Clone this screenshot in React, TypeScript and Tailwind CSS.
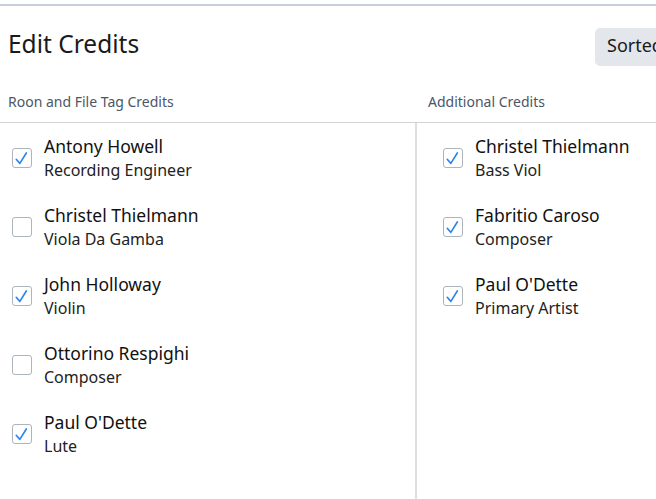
import React from "react";

type Item = { name: string; role: string; checked: boolean };

const left: Item[] = [
  { name: "Antony Howell", role: "Recording Engineer", checked: true },
  { name: "Christel Thielmann", role: "Viola Da Gamba", checked: false },
  { name: "John Holloway", role: "Violin", checked: true },
  { name: "Ottorino Respighi", role: "Composer", checked: false },
  { name: "Paul O'Dette", role: "Lute", checked: true },
];

const right: Item[] = [
  { name: "Christel Thielmann", role: "Bass Viol", checked: true },
  { name: "Fabritio Caroso", role: "Composer", checked: true },
  { name: "Paul O'Dette", role: "Primary Artist", checked: true },
];

function Box({ checked }: { checked: boolean }) {
  return (
    <div className="w-[20px] h-[20px] shrink-0 rounded-[3px] border border-[#aeb4bc] bg-white flex items-center justify-center">
      {checked && (
        <svg width="20" height="20" viewBox="0 0 20 20" className="block">
          <path
            d="M3.6 11.4 L7.6 16 L14.8 4.4"
            fill="none"
            stroke="#2b84ea"
            strokeWidth="1.8"
            strokeLinecap="round"
            strokeLinejoin="round"
          />
        </svg>
      )}
    </div>
  );
}

function Row({ item }: { item: Item }) {
  return (
    <div className="flex items-center">
      <div className="mt-[2px]">
        <Box checked={item.checked} />
      </div>
      <div className="ml-[12px]">
        <div className="text-[17.5px] leading-[24px] text-[#111111]">{item.name}</div>
        <div className="mt-[2px] text-[16px] leading-[20px] text-[#222222]">{item.role}</div>
      </div>
    </div>
  );
}

export default function App() {
  return (
    <div className="w-[656px] h-[499px] overflow-hidden bg-white font-['Noto_Sans',sans-serif]">
      <div className="w-[800px]">
        <div className="h-[4px]" />
        <div className="h-[1.5px] bg-[#c6cfd9]" />
        <div className="flex items-start justify-between w-[775px] pl-[8px] pt-[22px]">
          <div className="text-[24.5px] leading-[32px] text-[#1a1a1a]">Edit Credits</div>
          <div className="w-[180px] h-[38px] rounded-[5px] bg-[#e3e6eb] px-[12px] text-[18px] leading-[34px] pb-[4px] text-[#1a1a1a] whitespace-nowrap">
            Sorted by Name
          </div>
        </div>
        <div className="grid grid-cols-[417px_1fr] mt-[26px] border-b border-[#d4d4d4] pb-[10px]">
          <div className="pl-[8px] text-[14px] leading-[20px] text-[#4c5666]">Roon and File Tag Credits</div>
          <div className="pl-[11px] text-[14px] leading-[20px] text-[#4c5666]">Additional Credits</div>
        </div>
        <div className="grid grid-cols-[417px_1fr] h-[378px]">
          <div className="border-r-2 border-[#dedede] pl-[12px] pt-[11px] flex flex-col gap-[23px]">
            {left.map((it, i) => (
              <Row key={i} item={it} />
            ))}
          </div>
          <div className="pl-[26px] pt-[11px] flex flex-col gap-[23px]">
            {right.map((it, i) => (
              <Row key={i} item={it} />
            ))}
          </div>
        </div>
      </div>
    </div>
  );
}
